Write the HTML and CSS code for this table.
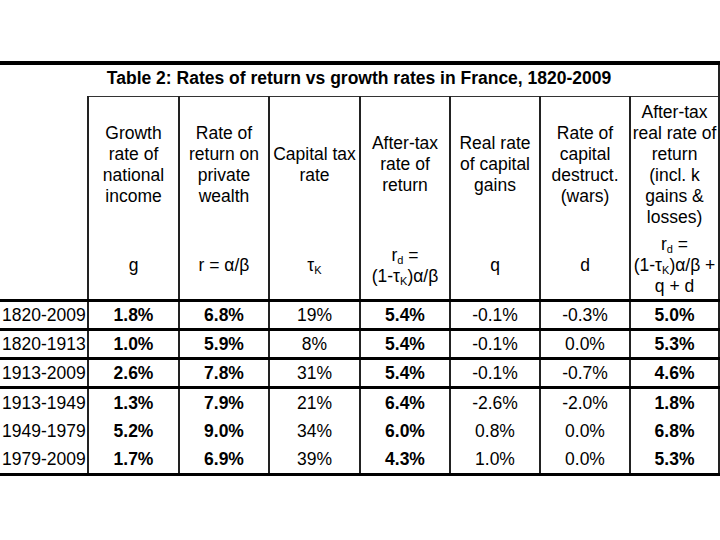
FILE: index.html
```html
<!DOCTYPE html>
<html lang="en">
<head>
<meta charset="utf-8">
<title>Table 2: Rates of return vs growth rates in France, 1820-2009</title>
<link rel="stylesheet" href="styles.css">
</head>
<body>
<div class="page">
<table class="rt">
  <colgroup>
    <col class="c-label">
    <col class="c-a">
    <col class="c-b">
    <col class="c-a">
    <col class="c-b">
    <col class="c-b">
    <col class="c-b">
    <col class="c-last">
  </colgroup>
  <tr class="title-row">
    <td class="title" colspan="8">Table 2: Rates of return vs growth rates in France, 1820-2009</td>
  </tr>
  <tr class="desc-row">
    <td class="blank" rowspan="2"></td>
    <th>Growth<br>rate of<br>national<br>income</th>
    <th>Rate of<br>return on<br>private<br>wealth</th>
    <th>Capital tax<br>rate</th>
    <th>After-tax<br>rate of<br>return</th>
    <th>Real rate<br>of capital<br>gains</th>
    <th>Rate of<br>capital<br>destruct.<br>(wars)</th>
    <th>After-tax<br>real rate of<br>return<br>(incl. k<br>gains &amp;<br>losses)</th>
  </tr>
  <tr class="formula-row">
    <th>g</th>
    <th>r = α/β</th>
    <th>τ<sub>K</sub></th>
    <th>r<sub>d</sub> =<br>(1-τ<sub>K</sub>)α/β</th>
    <th>q</th>
    <th>d</th>
    <th>r<sub>d</sub> =<br>(1-τ<sub>K</sub>)α/β +<br>q + d</th>
  </tr>
  <tr class="data sep">
    <td class="label">1820-2009</td><td class="b">1.8%</td><td class="b">6.8%</td><td>19%</td><td class="b">5.4%</td><td>-0.1%</td><td>-0.3%</td><td class="b">5.0%</td>
  </tr>
  <tr class="data sep">
    <td class="label">1820-1913</td><td class="b">1.0%</td><td class="b">5.9%</td><td>8%</td><td class="b">5.4%</td><td>-0.1%</td><td>0.0%</td><td class="b">5.3%</td>
  </tr>
  <tr class="data sep">
    <td class="label">1913-2009</td><td class="b">2.6%</td><td class="b">7.8%</td><td>31%</td><td class="b">5.4%</td><td>-0.1%</td><td>-0.7%</td><td class="b">4.6%</td>
  </tr>
  <tr class="data sep tall">
    <td class="label">1913-1949</td><td class="b">1.3%</td><td class="b">7.9%</td><td>21%</td><td class="b">6.4%</td><td>-2.6%</td><td>-2.0%</td><td class="b">1.8%</td>
  </tr>
  <tr class="data tall">
    <td class="label">1949-1979</td><td class="b">5.2%</td><td class="b">9.0%</td><td>34%</td><td class="b">6.0%</td><td>0.8%</td><td>0.0%</td><td class="b">6.8%</td>
  </tr>
  <tr class="data tall">
    <td class="label">1979-2009</td><td class="b">1.7%</td><td class="b">6.9%</td><td>39%</td><td class="b">4.3%</td><td>1.0%</td><td>0.0%</td><td class="b">5.3%</td>
  </tr>
</table>
</div>
</body>
</html>
```
FILE: styles.css
```css
html, body {
  margin: 0;
  padding: 0;
  background: #ffffff;
}

body {
  font-family: "Liberation Sans", Arial, sans-serif;
  font-size: 17.5px;
  color: #000;
}

.page {
  padding-top: 61px;
}

.rt {
  border-collapse: collapse;
  table-layout: fixed;
  width: 719px;
  border-top: 4px solid #000;
  border-right: 2px solid #222;
  border-bottom: 3px solid #000;
}

.c-label { width: 88px; }
.c-a { width: 91px; }
.c-b { width: 90px; }
.c-last { width: 89px; }

.rt td, .rt th {
  padding: 0;
  text-align: center;
  font-weight: normal;
  line-height: 21px;
  white-space: nowrap;
}

.rt .title {
  height: 28px;
  font-weight: bold;
  text-align: center;
  vertical-align: top;
  padding-top: 3px;
  line-height: 20px;
}

.desc-row th {
  height: 135px;
  vertical-align: middle;
  border-top: 1px solid #333;
  border-left: 2px solid #222;
}

.formula-row th {
  height: 67px;
  vertical-align: middle;
  border-left: 2px solid #222;
}

.blank {
  border: none;
}

.rt sub {
  font-size: 11px;
  line-height: 0;
  vertical-align: -3px;
}

.data td {
  height: 26px;
  border-left: 2px solid #222;
  line-height: 20px;
}

.data.tall td {
  height: 28px;
}

.data.sep td {
  border-top: 3px solid #000;
}

.rt .data td.label {
  text-align: left;
  padding-left: 2px;
  border-left: none;
}

.rt .data td.b {
  font-weight: bold;
}
```
